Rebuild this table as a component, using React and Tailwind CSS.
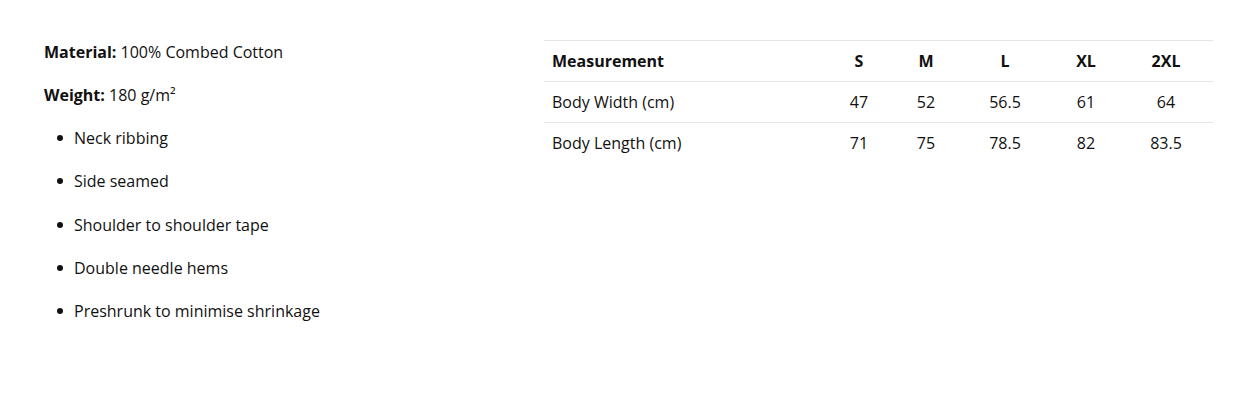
export default function App() {
  const cols = ["S", "M", "L", "XL", "2XL"];
  const rows = [
    ["Body Width (cm)", "47", "52", "56.5", "61", "64"],
    ["Body Length (cm)", "71", "75", "78.5", "82", "83.5"],
  ];
  const widths = ["w-[279px]", "w-[72px]", "w-[62px]", "w-[96px]", "w-[66px]", "w-[94px]"];
  const bullets = [
    "Neck ribbing",
    "Side seamed",
    "Shoulder to shoulder tape",
    "Double needle hems",
    "Preshrunk to minimise shrinkage",
  ];
  return (
    <div className="w-[1253px] h-[405px] bg-white text-[#111] text-[16px] leading-6 flex pt-10 pl-11" style={{ fontFamily: '"Open Sans", sans-serif' }}>
      <div className="w-[500px] flex flex-col gap-[19px]">
        <p><span className="font-bold">Material:</span> 100% Combed Cotton</p>
        <p><span className="font-bold">Weight:</span> 180 g/m²</p>
        <ul className="flex flex-col gap-[19.3px] pl-[13px]">
          {bullets.map((b) => (
            <li key={b} className="flex items-center">
              <span className="w-[6px] h-[6px] rounded-full bg-[#111] mr-[11px]"></span>
              <span>{b}</span>
            </li>
          ))}
        </ul>
      </div>
      <div className="w-[669px]">
        <table className="w-[669px] table-fixed border-collapse">
          <colgroup>
            {widths.map((w, i) => (
              <col key={i} className={w} />
            ))}
          </colgroup>
          <thead>
            <tr className="border-t border-[#e5e5e5]">
              <th className="text-left font-bold px-2 py-2">Measurement</th>
              {cols.map((c) => (
                <th key={c} className="text-center font-bold py-2">{c}</th>
              ))}
            </tr>
          </thead>
          <tbody>
            {rows.map((r) => (
              <tr key={r[0]} className="border-t border-[#e5e5e5]">
                <td className="text-left px-2 py-2">{r[0]}</td>
                {r.slice(1).map((v, i) => (
                  <td key={i} className="text-center py-2">{v}</td>
                ))}
              </tr>
            ))}
          </tbody>
        </table>
      </div>
    </div>
  );
}
